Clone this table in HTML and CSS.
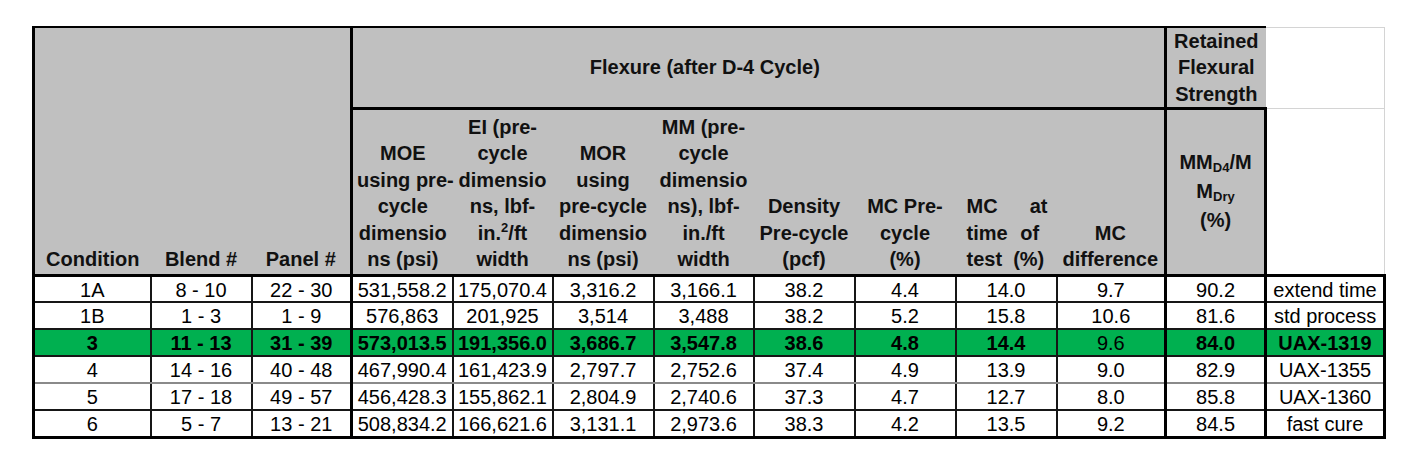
FILE: index.html
```html
<!DOCTYPE html>
<html>
<head>
<meta charset="utf-8">
<link rel="stylesheet" href="styles.css">
</head>
<body>
<div class="page">
<table class="sheet">
  <colgroup>
    <col class="c-cond"><col class="c-blend"><col class="c-panel"><col class="c-moe"><col class="c-ei"><col class="c-mor"><col class="c-mm"><col class="c-dens"><col class="c-mcpre"><col class="c-mcat"><col class="c-mcdiff"><col class="c-ret"><col class="c-note">
  </colgroup>
  <thead>
    <tr class="hr1">
      <th class="hd-side hd-first" rowspan="2">Condition</th>
      <th class="hd-side" rowspan="2">Blend #</th>
      <th class="hd-side hd-lastside" rowspan="2">Panel #</th>
      <th class="flex-title" colspan="7">Flexure (after D-4 Cycle)</th>
      <th class="flex-tail"></th>
      <th class="ret-title">Retained<br>Flexural<br>Strength</th>
      <th class="note-blank note-top"></th>
    </tr>
    <tr class="hr2">
      <th class="sub tk-l">MOE<br>using pre-<br>cycle<br>dimensio<br>ns (psi)</th>
      <th class="sub">EI (pre-<br>cycle<br>dimensio<br>ns, lbf-<br>in.<sup>2</sup>/ft<br>width</th>
      <th class="sub">MOR<br>using<br>pre-cycle<br>dimensio<br>ns (psi)</th>
      <th class="sub">MM (pre-<br>cycle<br>dimensio<br>ns), lbf-<br>in./ft<br>width</th>
      <th class="sub">Density<br>Pre-cycle<br>(pcf)</th>
      <th class="sub">MC Pre-<br>cycle<br>(%)</th>
      <th class="sub sub-just"><span class="jl"><span>MC</span><span>at</span></span><span class="jl-mid">time of</span><span class="jl-last">test&nbsp; (%)</span></th>
      <th class="sub">MC<br>difference</th>
      <th class="ratio tk-l">MM<sub>D4</sub>/M<br>M<sub>Dry</sub><br>(%)</th>
      <th class="note-blank note-mid"></th>
    </tr>
  </thead>
  <tbody>
    <tr>
      <td>1A</td><td>8 - 10</td><td>22 - 30</td><td class="tk-l">531,558.2</td><td>175,070.4</td><td>3,316.2</td><td>3,166.1</td><td>38.2</td><td>4.4</td><td>14.0</td><td>9.7</td><td class="tk-l">90.2</td><td class="tk-l tk-r">extend time</td>
    </tr>
    <tr>
      <td>1B</td><td>1 - 3</td><td>1 - 9</td><td class="tk-l">576,863</td><td>201,925</td><td>3,514</td><td>3,488</td><td>38.2</td><td>5.2</td><td>15.8</td><td>10.6</td><td class="tk-l">81.6</td><td class="tk-l tk-r">std process</td>
    </tr>
    <tr class="hl">
      <td>3</td><td>11 - 13</td><td>31 - 39</td><td class="tk-l">573,013.5</td><td>191,356.0</td><td>3,686.7</td><td>3,547.8</td><td>38.6</td><td>4.8</td><td>14.4</td><td class="plain">9.6</td><td class="tk-l">84.0</td><td class="tk-l tk-r">UAX-1319</td>
    </tr>
    <tr class="soft-below">
      <td>4</td><td>14 - 16</td><td>40 - 48</td><td class="tk-l">467,990.4</td><td>161,423.9</td><td>2,797.7</td><td>2,752.6</td><td>37.4</td><td>4.9</td><td>13.9</td><td>9.0</td><td class="tk-l">82.9</td><td class="tk-l tk-r">UAX-1355</td>
    </tr>
    <tr>
      <td>5</td><td>17 - 18</td><td>49 - 57</td><td class="tk-l">456,428.3</td><td>155,862.1</td><td>2,804.9</td><td>2,740.6</td><td>37.3</td><td>4.7</td><td>12.7</td><td>8.0</td><td class="tk-l">85.8</td><td class="tk-l tk-r">UAX-1360</td>
    </tr>
    <tr class="last">
      <td>6</td><td>5 - 7</td><td>13 - 21</td><td class="tk-l">508,834.2</td><td>166,621.6</td><td>3,131.1</td><td>2,973.6</td><td>38.3</td><td>4.2</td><td>13.5</td><td>9.2</td><td class="tk-l">84.5</td><td class="tk-l tk-r">fast cure</td>
    </tr>
  </tbody>
</table>
</div>
</body>
</html>
```

FILE: styles.css
```css
body {
  margin: 0;
  background: #ffffff;
  font-family: "Liberation Sans", Arial, sans-serif;
  color: #000;
}

.page {
  padding: 26px 0 0 32px;
}

.sheet {
  border-collapse: collapse;
  table-layout: fixed;
  width: 1353px;
  font-size: 20px;
}

.c-cond { width: 117px; }
.c-blend { width: 101px; }
.c-panel { width: 100px; }
.c-moe { width: 101px; }
.c-ei { width: 100px; }
.c-mor { width: 101px; }
.c-mm { width: 100px; }
.c-dens { width: 101px; }
.c-mcpre { width: 101px; }
.c-mcat { width: 101px; }
.c-mcdiff { width: 109px; }
.c-ret { width: 100px; }
.c-note { width: 119px; }

/* ---------- header ---------- */
th {
  background: #c0c0c0;
  font-weight: bold;
  color: #111;
  text-align: center;
  white-space: nowrap;
  padding: 0 4px;
  line-height: 26.5px;
}

.hr1 { height: 76px; }
.hr2 { height: 167px; }

.hd-side {
  vertical-align: bottom;
  padding-bottom: 1px;
  border-top: 2px solid #000;
  border-bottom: 3px solid #000;
  border-left: none;
  border-right: none;
}
.hd-first { border-left: 3px solid #000; }
.hd-lastside { border-right: 3px solid #000; }

.flex-title {
  border-top: 2px solid #000;
  border-bottom: 3px solid #000;
  border-left: 3px solid #000;
  border-right: none;
  vertical-align: middle;
}
.flex-tail {
  border-top: 2px solid #000;
  border-bottom: 3px solid #000;
  border-left: none;
  border-right: 3px solid #000;
}
.ret-title {
  border-top: 2px solid #000;
  border-bottom: 3px solid #000;
  border-left: 3px solid #000;
  border-right: none;
  vertical-align: middle;
  line-height: 26.3px;
}

.note-blank {
  background: #ffffff;
}
.note-top {
  border-top: 1px solid #d4d4d4;
  border-right: 1px solid #d4d4d4;
  border-bottom: 1px solid #d4d4d4;
  border-left: none;
}
.note-mid {
  border-left: 3px solid #000;
  border-right: 1px solid #d4d4d4;
  border-bottom: 3px solid #000;
}

.sub {
  vertical-align: bottom;
  padding: 0 4px 1px;
  border-bottom: 3px solid #000;
  border-left: none;
  border-right: none;
}
.sub sup {
  font-size: 13px;
  line-height: 0;
  vertical-align: 8px;
}

.sub-just {
  text-align: left;
  padding: 0 9px 1px 11px;
}
.jl {
  display: flex;
  justify-content: space-between;
}
.jl-mid {
  display: block;
  word-spacing: 7px;
}
.jl-last {
  display: block;
}

.ratio {
  vertical-align: middle;
  line-height: 29px;
  padding-top: 0;
  border-bottom: 3px solid #000;
  border-right: 3px solid #000;
}
.ratio sub {
  font-size: 13px;
  line-height: 0;
  vertical-align: -3px;
}

/* ---------- body ---------- */
tbody tr { height: 27px; }

td {
  padding: 1px 4px 0;
  text-align: center;
  line-height: 22px;
  white-space: nowrap;
  border: 2px solid #161616;
}
td:first-child { border-left: 3px solid #000; }
.tk-l { border-left: 3px solid #000; }
.tk-r { border-right: 3px solid #000; }
tbody tr.last td { border-bottom: 3px solid #000; }

.soft-below td { border-bottom-color: #8a8a8a; }

.hl td {
  background: #00b050;
  font-weight: bold;
}
.hl td.plain { font-weight: normal; }
```
